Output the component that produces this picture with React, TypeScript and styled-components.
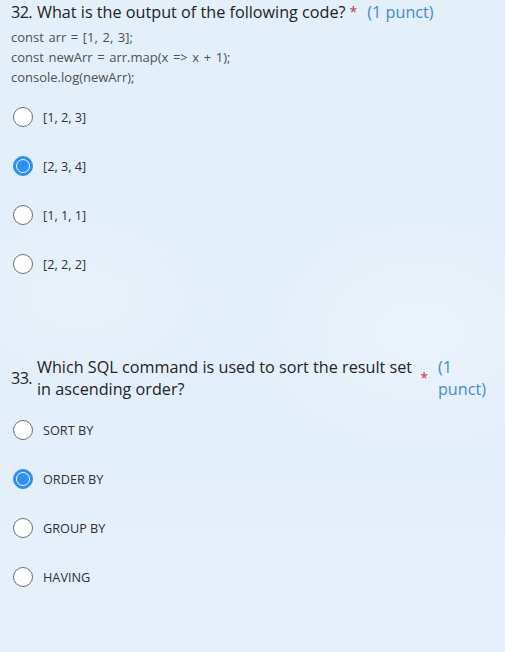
import React from "react";
import styled, { createGlobalStyle } from "styled-components";

const Global = createGlobalStyle`
  html, body { margin: 0; padding: 0; }
  body {
    width: 505px;
    min-height: 652px;
    font-family: "Open Sans", "Noto Sans", sans-serif;
    background:
      radial-gradient(ellipse 260px 180px at 420px 330px, rgba(255,255,255,0.35), transparent 70%),
      radial-gradient(ellipse 220px 140px at 80px 300px, rgba(255,255,255,0.25), transparent 70%),
      linear-gradient(180deg, #e3eff9 0%, #e2eef9 50%, #e5f0fb 100%);
    overflow: hidden;
  }
`;

const Page = styled.div`
  display: flex;
  flex-direction: column;
  padding: 1px 19px 0 11px;
  height: 651px;
  box-sizing: border-box;
`;

const Question = styled.section<{ $gap?: number }>`
  display: flex;
  flex-direction: column;
  margin-top: ${(p) => p.$gap ?? 0}px;
`;

const TitleRow = styled.div`
  display: flex;
  align-items: center;
  font-size: 16.2px;
  line-height: 22px;
  color: #242424;
`;

const Num = styled.span`
  flex: none;
  width: 26px;
  letter-spacing: -0.6px;
`;

const TitleText = styled.span`
  flex: 0 1 auto;
`;

const Star = styled.span`
  flex: none;
  color: #c4314b;
  font-size: 14px;
  margin: 0 10px 0 4px;
  align-self: center;
`;

const Points = styled.span`
  flex: 0 6 auto;
  min-width: min-content;
  color: #3d8bdb;
`;

const Code = styled.div`
  margin-top: 4px;
  font-size: 13px;
  line-height: 20px;
  color: #505050;
  word-spacing: 1.2px;
`;

const Options = styled.div`
  display: flex;
  flex-direction: column;
  margin-top: 5px;
  padding-left: 2px;
`;

const Option = styled.label`
  display: flex;
  align-items: center;
  height: 49px;
  gap: 10px;
  font-size: 12.7px;
  color: #303030;
`;

const Radio = styled.span<{ $checked?: boolean }>`
  position: relative;
  flex: none;
  width: 20px;
  height: 20px;
  border-radius: 50%;
  box-sizing: border-box;
  background: ${(p) => (p.$checked ? "#2b8ff5" : "#ffffff")};
  border: 1px solid ${(p) => (p.$checked ? "#2b8ff5" : "#6e6e6e")};
  &::after {
    content: "";
    display: ${(p) => (p.$checked ? "block" : "none")};
    position: absolute;
    left: 50%;
    top: 50%;
    width: 14px;
    height: 14px;
    transform: translate(-50%, -50%);
    border-radius: 50%;
    border: 1.5px solid #ffffff;
    box-sizing: border-box;
  }
`;

type Q = {
  num: string;
  title: string;
  code?: string[];
  options: string[];
  checked: number;
  gap?: number;
};

const questions: Q[] = [
  {
    num: "32.",
    title: "What is the output of the following code?",
    code: ["const arr = [1, 2, 3];", "const newArr = arr.map(x => x + 1);", "console.log(newArr);"],
    options: ["[1, 2, 3]", "[2, 3, 4]", "[1, 1, 1]", "[2, 2, 2]"],
    checked: 1,
  },
  {
    num: "33.",
    title: "Which SQL command is used to sort the result set in ascending order?",
    options: ["SORT BY", "ORDER BY", "GROUP BY", "HAVING"],
    checked: 1,
    gap: 68,
  },
];

export default function App() {
  return (
    <>
      <Global />
      <Page>
        {questions.map((q) => (
          <Question key={q.num} $gap={q.gap}>
            <TitleRow>
              <Num>{q.num}</Num>
              <TitleText>{q.title}</TitleText>
              <Star>*</Star>
              <Points>(1 punct)</Points>
            </TitleRow>
            {q.code && (
              <Code>
                {q.code.map((l) => (
                  <div key={l}>{l}</div>
                ))}
              </Code>
            )}
            <Options>
              {q.options.map((o, i) => (
                <Option key={o}>
                  <Radio $checked={i === q.checked} />
                  {o}
                </Option>
              ))}
            </Options>
          </Question>
        ))}
      </Page>
    </>
  );
}
